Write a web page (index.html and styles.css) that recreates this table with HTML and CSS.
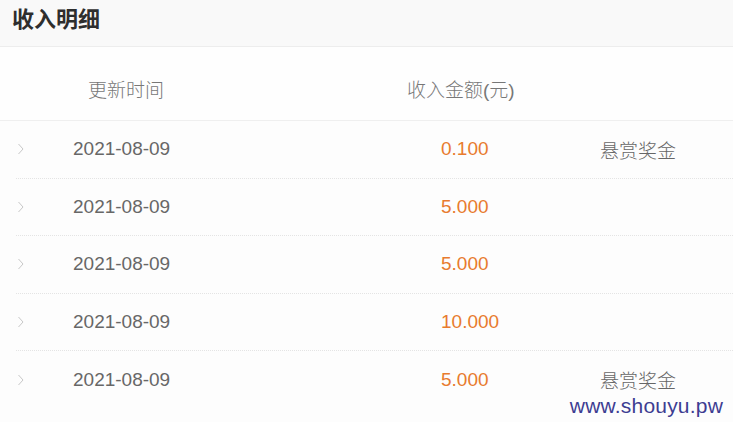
FILE: index.html
```html
<!DOCTYPE html>
<html lang="zh">
<head>
<meta charset="utf-8">
<title>收入明细</title>
<link rel="stylesheet" href="styles.css">
</head>
<body>
<div class="page">
  <div class="title-bar"><h1 class="title">收入明细</h1></div>
  <div class="table-head">
    <div class="th th-date">更新时间</div>
    <div class="th th-amount">收入金额(元)</div>
  </div>
  <div class="rows">
    <div class="row">
      <svg class="chev" width="8" height="12" viewBox="0 0 8 12"><polyline points="1.5,1 6,6 1.5,11" fill="none" stroke="#c8c8c8" stroke-width="1"/></svg>
      <span class="date">2021-08-09</span><span class="amount">0.100</span><span class="type">悬赏奖金</span>
    </div>
    <div class="row">
      <svg class="chev" width="8" height="12" viewBox="0 0 8 12"><polyline points="1.5,1 6,6 1.5,11" fill="none" stroke="#c8c8c8" stroke-width="1"/></svg>
      <span class="date">2021-08-09</span><span class="amount">5.000</span><span class="type"></span>
    </div>
    <div class="row">
      <svg class="chev" width="8" height="12" viewBox="0 0 8 12"><polyline points="1.5,1 6,6 1.5,11" fill="none" stroke="#c8c8c8" stroke-width="1"/></svg>
      <span class="date">2021-08-09</span><span class="amount">5.000</span><span class="type"></span>
    </div>
    <div class="row">
      <svg class="chev" width="8" height="12" viewBox="0 0 8 12"><polyline points="1.5,1 6,6 1.5,11" fill="none" stroke="#c8c8c8" stroke-width="1"/></svg>
      <span class="date">2021-08-09</span><span class="amount">10.000</span><span class="type"></span>
    </div>
    <div class="row">
      <svg class="chev" width="8" height="12" viewBox="0 0 8 12"><polyline points="1.5,1 6,6 1.5,11" fill="none" stroke="#c8c8c8" stroke-width="1"/></svg>
      <span class="date">2021-08-09</span><span class="amount">5.000</span><span class="type">悬赏奖金</span>
    </div>
  </div>
  <div class="watermark">www.shouyu.pw</div>
</div>
</body>
</html>
```
FILE: styles.css
```css
* { box-sizing: border-box; }
html, body { margin: 0; padding: 0; }
body {
  background: #fdfdfd;
  font-family: "Liberation Sans", "Noto Sans CJK SC", sans-serif;
  width: 733px;
  height: 422px;
  overflow: hidden;
}
.page { position: relative; height: 422px; }
.title-bar {
  height: 47px;
  background: #f9f9f9;
  border-bottom: 1px solid #ededed;
  padding: 6px 0 0 12px;
}
.title {
  margin: 0;
  font-size: 22px;
  font-weight: bold;
  color: #2e2e2e;
  line-height: 28px;
}
.table-head {
  height: 74px;
  display: flex;
  align-items: center;
  padding-top: 10px;
  border-bottom: 1px solid #efefef;
  background: #fefefe;
}
.th { font-size: 19px; color: #777; font-weight: 300; }
.th-date { width: 88px; margin-left: 88px; white-space: nowrap; }
.th-amount { margin-left: 231px; white-space: nowrap; }
.rows { background: #fdfdfd; }
.row {
  height: 57.5px;
  display: grid;
  grid-template-columns: 57px 368px 159px 1fr;
  align-items: center;
  margin-left: 16px;
  border-bottom: 1px dotted #e4e4e4;
  font-size: 19px;
}
.row:last-child { border-bottom: none; }
.chev { margin-left: 1px; }
.date { color: #676767; }
.amount { color: #e87b2e; }
.type { color: #666; font-weight: 300; }
.watermark {
  position: absolute;
  right: 10px;
  bottom: 4px;
  font-family: "Liberation Sans", sans-serif;
  font-size: 21px;
  color: #3d3d92;
  letter-spacing: 0.2px;
}
```
